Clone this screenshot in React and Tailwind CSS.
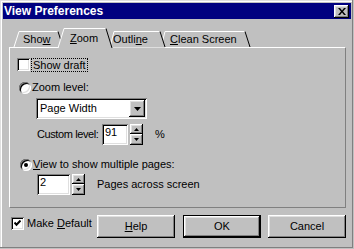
import React from 'react';

const raised = 'shadow-[inset_-1px_-1px_#000,inset_1px_1px_#fff,inset_-2px_-2px_#808080,inset_2px_2px_#dfdfdf]';
const sunken = 'shadow-[inset_1px_1px_#808080,inset_-1px_-1px_#fff,inset_2px_2px_#000,inset_-2px_-2px_#dfdfdf]';

const CheckBox = ({ checked }) => (
  <div className={`w-[13px] h-[13px] shrink-0 bg-white flex items-center justify-center ${sunken}`}>
    {checked && (
      <svg width="7" height="7" viewBox="0 0 7 7">
        <path d="M0.5 2.5 L2.5 4.8 L6.5 0.5" stroke="#000" strokeWidth="2" fill="none" />
      </svg>
    )}
  </div>
);

const Radio = ({ checked }) => (
  <div className={`w-[12px] h-[12px] shrink-0 rounded-full bg-white flex items-center justify-center ${sunken}`}>
    {checked && <div className="w-[4px] h-[4px] rounded-full bg-black" />}
  </div>
);

const Tri = ({ up }) => (
  <svg width="5" height="3" viewBox="0 0 5 3">
    <path d={up ? 'M2.5 0 L5 3 H0 Z' : 'M0 0 H5 L2.5 3 Z'} fill="#000" />
  </svg>
);

const Spinner = () => (
  <div className="flex flex-col w-[13px] h-[21px] shrink-0">
    <div className={`h-[10px] flex items-center justify-center bg-[#c0c0c0] ${raised}`}>
      <Tri up />
    </div>
    <div className={`h-[11px] flex items-center justify-center bg-[#c0c0c0] ${raised}`}>
      <Tri />
    </div>
  </div>
);

const SpinEdit = ({ value, width }) => (
  <div className="flex items-start gap-[2px] shrink-0">
    <div className={`h-[21px] bg-white pl-[3px] pt-[2px] leading-[13px] ${sunken}`} style={{ width }}>
      {value}
    </div>
    <Spinner />
  </div>
);

const Button = ({ children, isDefault, className = '' }) => (
  <div
    className={`w-[78px] h-[23px] shrink-0 flex items-center justify-center bg-[#c0c0c0] ${
      isDefault ? 'border border-black' : ''
    } ${className}`}
  >
    <div className={`w-full h-full flex items-center justify-center ${raised}`}>{children}</div>
  </div>
);

export default function App() {
  return (
    <div className="w-[354px] h-[249px] bg-[#c0c0c0] p-[3px] flex flex-col text-[11px] leading-[13px] text-black whitespace-nowrap font-['Liberation_Sans',Arial,sans-serif] shadow-[inset_-1px_-1px_#c0c0c0,inset_-2px_-2px_#808080,inset_1px_1px_#dfdfdf,inset_2px_2px_#fff]">
      {/* Title bar */}
      <div className="h-[16px] bg-[#000080] flex items-center justify-between pl-[1px] pr-[2px]">
        <span className="text-white font-bold text-[12px]">View Preferences</span>
        <div className={`w-[15px] h-[13px] bg-[#c0c0c0] flex items-center justify-center ${raised}`}>
          <svg width="8" height="7" viewBox="0 0 8 7">
            <path d="M0 0h2l2 2.5L6 0h2L5 3.5 8 7H6L4 4.5 2 7H0l3-3.5z" fill="#000" />
          </svg>
        </div>
      </div>

      {/* Tabs */}
      <div className="relative mt-[8px] ml-[6px] h-[20px]">
        <svg className="absolute left-0 top-0 z-10 overflow-visible pointer-events-none" width="340" height="21">
          <path d="M152 20 L156 4.5 H236" stroke="#fff" fill="none" />
          <path d="M236 4.5 L241 20" stroke="#000" fill="none" />
          <polygon points="101,20.5 105,4.5 151,4.5 156,20.5" fill="#c0c0c0" />
          <path d="M101 20 L105 4.5 H151" stroke="#fff" fill="none" />
          <path d="M151 4.5 L156 20" stroke="#000" fill="none" />
          <path d="M5 20 L10 4.5 H49" stroke="#fff" fill="none" />
          <path d="M49 4.5 L54 20" stroke="#000" fill="none" />
          <polygon points="49,21.5 55,1.5 97,1.5 103,21.5" fill="#c0c0c0" />
          <path d="M49 21 L55 1.5 H97" stroke="#fff" fill="none" />
          <path d="M97 1.5 L103 21" stroke="#000" fill="none" />
        </svg>
        <div className="relative z-20 flex pt-[6px]">
          <div className="w-[61px] pl-[14px]">
            Sho<span className="underline">w</span>
          </div>
          <div className="w-[43px] -mt-[1px]">
            <span className="underline">Z</span>oom
          </div>
          <div className="w-[57px]">
            Outli<span className="underline">n</span>e
          </div>
          <div>
            <span className="underline">C</span>lean Screen
          </div>
        </div>
      </div>

      {/* Panel */}
      <div className="ml-[6px] w-[337px] h-[161px] border-t border-l border-white border-r border-b border-r-[#808080] border-b-[#808080] flex flex-col pl-[7px] pt-[10px]">
        <div className="flex items-center h-[13px]">
          <CheckBox />
          <span className="ml-[1px] px-[1px] border border-dotted border-black leading-[12px]">Show draft</span>
        </div>

        <div className="flex items-center mt-[10px] pl-[2px]">
          <Radio />
          <span className="ml-[1px]">Zoom level:</span>
        </div>

        <div className={`mt-[4px] ml-[19px] w-[111px] h-[21px] bg-white flex p-[2px] ${sunken}`}>
          <div className="flex-1 flex items-center pl-[2px]">Page Width</div>
          <div className={`w-[16px] h-[17px] bg-[#c0c0c0] flex items-center justify-center ${raised}`}>
            <svg width="7" height="4" viewBox="0 0 7 4">
              <path d="M0 0 H7 L3.5 4 Z" fill="#000" />
            </svg>
          </div>
        </div>

        <div className="flex items-center mt-[5px] ml-[20px] h-[21px]">
          <span className="w-[65px] shrink-0 tracking-[-0.4px]">Custom level:</span>
          <SpinEdit value="91" width={26} />
          <span className="ml-[12px]">%</span>
        </div>

        <div className="flex items-center mt-[13px] pl-[3px]">
          <Radio checked />
          <span className="ml-[1px]">
            <span className="underline">V</span>iew to show multiple pages:
          </span>
        </div>

        <div className="flex items-center mt-[3px] ml-[20px] h-[21px]">
          <SpinEdit value="2" width={33} />
          <span className="ml-[12px]">Pages across screen</span>
        </div>
      </div>

      {/* Bottom row */}
      <div className="flex items-start mt-[7px]">
        <div className="flex items-center ml-[8px] mt-[2px] w-[86px] shrink-0">
          <CheckBox checked />
          <span className="ml-[3px]">
            Make <span className="underline">D</span>efault
          </span>
        </div>
        <Button className="mr-[8px]">
          <span className="underline">H</span>elp
        </Button>
        <Button isDefault className="mr-[7px]">OK</Button>
        <Button>Cancel</Button>
      </div>
    </div>
  );
}
